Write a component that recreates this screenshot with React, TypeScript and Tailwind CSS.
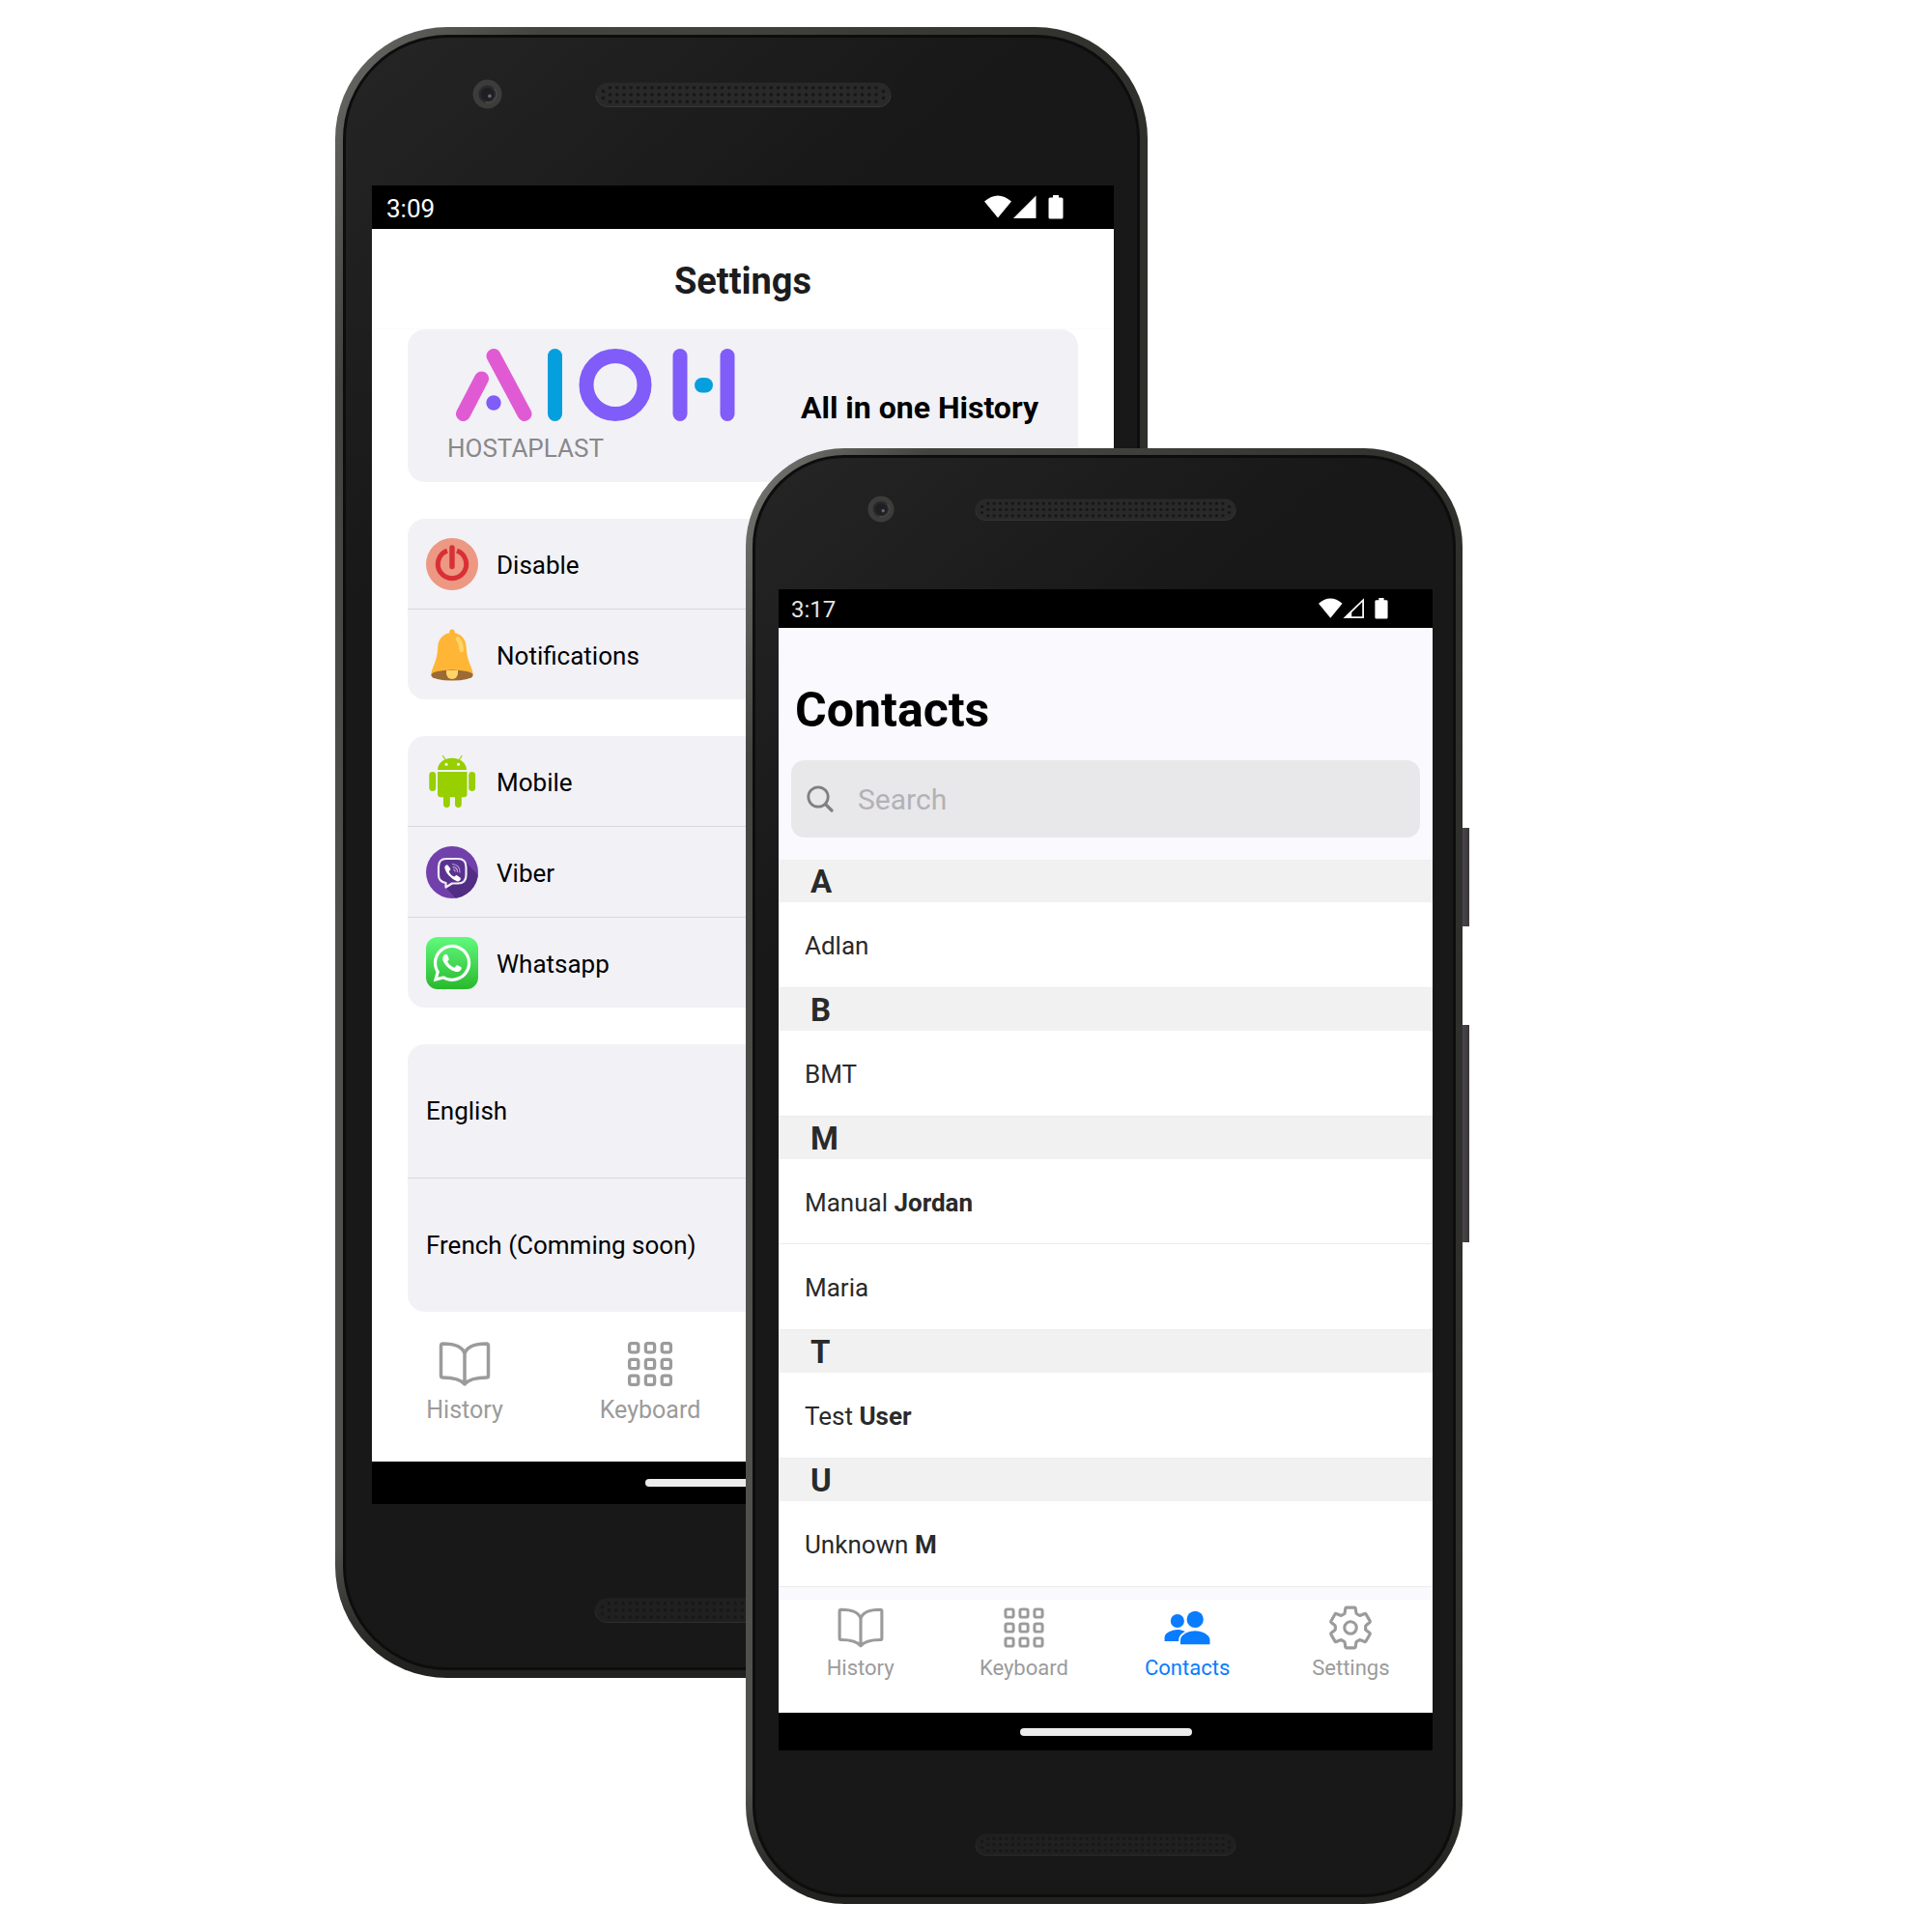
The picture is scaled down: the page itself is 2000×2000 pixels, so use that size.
import React, { useId, useState } from "react";
import { IoBookOutline, IoPeopleSharp, IoSettingsOutline } from "react-icons/io5";
import { FaWhatsapp } from "react-icons/fa";

function SpeakerGrille({ className, dim }: { className: string; dim?: boolean }) {
  const columns = Array.from({ length: 39 }, (_, i) => 15.5 + i * 7.25);
  return (
    <svg viewBox="0 0 307 26" className={className} aria-hidden="true">
      <rect x="0.5" y="0.5" width="306" height="25" rx="12.5" fill={dim ? "#202020" : "#292929"} />
      <path
        d="M1 14 A12 12 0 0 0 13 25.5 H294 A12 12 0 0 0 306 14"
        fill="none"
        stroke={dim ? "#2d2d2d" : "#383838"}
      />
      <g fill={dim ? "#181818" : "#171717"}>
        {[9.5, 16.5].map((y) => (
          <React.Fragment key={y}>
            <circle cx="8.5" cy={y} r="1.8" />
            <circle cx="298.5" cy={y} r="1.8" />
          </React.Fragment>
        ))}
        {columns.map((x) => (
          <React.Fragment key={x}>
            <circle cx={x} cy="5.8" r="1.8" />
            <circle cx={x} cy="13" r="1.8" />
            <circle cx={x} cy="20.2" r="1.8" />
          </React.Fragment>
        ))}
      </g>
    </svg>
  );
}

function Camera({ className }: { className: string }) {
  return (
    <svg viewBox="0 0 32 32" className={className} aria-hidden="true">
      <circle cx="16" cy="16" r="15.5" fill="#3c3c3b" />
      <circle cx="16" cy="16" r="9.5" fill="#2a2a2c" />
      <circle cx="16" cy="16" r="7" fill="#1e1e23" />
      <path d="M23.5 10 A9 9 0 0 1 14 24.5" fill="none" stroke="#4a4a4c" strokeWidth="1.4" />
      <circle cx="18.5" cy="18" r="1.9" fill="#66666b" />
    </svg>
  );
}

function StatusIcons({ className, weak }: { className: string; weak?: boolean }) {
  return (
    <svg viewBox="0 0 82 25" className={className} fill="#fff" role="img" aria-label="Wi-Fi, signal, battery">
      <path d="M0 6.5 Q14 -5.5 28 6.5 L14 23.5 Z" />
      {weak ? (
        <>
          <path d="M31.5 23 L52.5 23 L52.5 2.5 Z" fill="none" stroke="#fff" strokeWidth="2" />
          <path d="M30 24 L39 24 L39 15 Z" />
        </>
      ) : (
        <path d="M30 24 L53.5 24 L53.5 0.5 Z" />
      )}
      <path d="M71 0 H77 V2.5 H80 Q81.5 2.5 81.5 4 V23 Q81.5 24.5 80 24.5 H68 Q66.5 24.5 66.5 23 V4 Q66.5 2.5 68 2.5 H71 Z" />
    </svg>
  );
}

function SearchIcon() {
  return (
    <svg viewBox="0 0 28 28" className="mx-0.5 size-7 shrink-0 text-[#808083]" fill="none" aria-hidden="true">
      <circle cx="12" cy="12" r="10.2" stroke="currentColor" strokeWidth="2.8" />
      <path d="M19.5 19.5 L26 26" stroke="currentColor" strokeWidth="3.2" strokeLinecap="round" />
    </svg>
  );
}

function KeypadIcon({ className }: { className?: string }) {
  const offsets = [6.6, 23.4, 40.2];
  return (
    <svg viewBox="0 0 56 56" className={className} fill="none" stroke="currentColor" strokeWidth="3.3" aria-hidden="true">
      {offsets.map((y) => offsets.map((x) => <rect key={`${x}-${y}`} x={x} y={y} width="9.2" height="9.2" rx="2.2" />))}
    </svg>
  );
}

function AiohLogo() {
  return (
    <svg viewBox="0 0 289 75" className="ml-[9px] h-[75px] w-[289px]" role="img" aria-label="AIOH">
      <g strokeWidth="15" strokeLinecap="round" fill="none">
        <path d="M26.5 31 L7.5 67.5" stroke="#e05bd3" />
        <path d="M39 7.5 L71 67.5" stroke="#e05bd3" />
        <path d="M102.5 7.5 V67.5" stroke="#049fdc" />
        <circle cx="165" cy="37.5" r="30" stroke="#805cf8" />
        <path d="M232 7.5 V67.5" stroke="#805cf8" />
        <path d="M281 7.5 V67.5" stroke="#805cf8" />
      </g>
      <circle cx="39" cy="56" r="7.7" fill="#805cf8" />
      <rect x="247" y="30" width="19" height="15.5" rx="7.75" fill="#049fdc" />
    </svg>
  );
}

const rowIcon = "size-[54px] shrink-0";

function PowerIcon() {
  return (
    <svg viewBox="0 0 54 54" className={rowIcon} aria-hidden="true">
      <circle cx="27" cy="27" r="27" fill="#ec9883" />
      <path d="M32 13.2 A14.7 14.7 0 1 1 22 13.2" fill="none" stroke="#d93035" strokeWidth="5" />
      <path d="M27 10 V29.5" stroke="#d93035" strokeWidth="5.4" strokeLinecap="round" />
    </svg>
  );
}

function BellIcon() {
  return (
    <svg viewBox="0 0 54 54" className={rowIcon} aria-hidden="true">
      <path
        d="M27 .5c1.8 0 2.8 1.2 2.8 2.8v1C37.7 6 41.7 12 41.7 19.5 42.2 34 48.7 41 48.7 47H5.4C5.4 41 11.7 34 12.2 19.5 12.2 12 16.3 6 24.2 4.3v-1C24.2 1.7 25.2.5 27 .5z"
        fill="#ffb636"
      />
      <ellipse cx="27" cy="48" rx="21.7" ry="5.6" fill="#9c6a34" />
      <path d="M21 43 H33 V46 A6 6 0 0 1 21 46 Z" fill="#ffd469" />
      <path d="M33 10.5 Q36.5 14.5 36.7 22" fill="none" stroke="#ffd469" strokeWidth="4.5" strokeLinecap="round" />
    </svg>
  );
}

function AndroidIcon() {
  return (
    <svg viewBox="0 0 54 54" className={rowIcon} aria-hidden="true">
      <g fill="#97cf00">
        <path d="M12 15 C12 8 18.5 2.7 27 2.7 S42 8 42 15 Z" />
        <path d="M12 17 H42.5 V40 Q42.5 43.3 39 43.3 H15.5 Q12 43.3 12 40 Z" />
        <rect x="3.3" y="17" width="6.9" height="20" rx="3.4" />
        <rect x="44.2" y="17" width="6.9" height="20" rx="3.4" />
        <path d="M18 42 H24.8 V50.5 A3.4 3.4 0 0 1 18 50.5 Z" />
        <path d="M30 42 H36.8 V50.5 A3.4 3.4 0 0 1 30 50.5 Z" />
      </g>
      <path d="M17.5 .5 L20.5 5 M37 .5 L34 5" stroke="#97cf00" strokeWidth="1.2" strokeLinecap="round" />
      <circle cx="21" cy="9.2" r="1.5" fill="#fff" />
      <circle cx="33.5" cy="9.2" r="1.5" fill="#fff" />
    </svg>
  );
}

function ViberIcon() {
  const clip = useId();
  return (
    <svg viewBox="0 0 54 54" className={rowIcon} aria-hidden="true">
      <clipPath id={clip}>
        <circle cx="27" cy="27" r="27" />
      </clipPath>
      <g clipPath={`url(#${clip})`}>
        <rect width="54" height="54" fill="#7140ab" />
        <path d="M40.5 16 L60 36 V60 H36 L20 42 Z" fill="#512d84" />
        <path
          d="M21 13 H33 Q41.5 13 41.5 21.5 V30 Q41.5 38.5 33 38.5 H27 L20.5 42.5 V38 Q13 36.5 13 30 V21.5 Q13 13 21 13 Z"
          fill="#5a3391"
          stroke="#f1edf6"
          strokeWidth="2.2"
          strokeLinejoin="round"
        />
        <path
          d="M19.5 21 q1.5-2.5 3.2-1.2 l2.5 3.2 q.7 1.3-.8 2.3 q-1 .8-.2 2 q2 3.5 4.8 4.3 q.8 0 1.3-.8 q1-1.2 2.3-.3 l3 2.3 q1.2 1.3-1 3 q-1.2 1-2.6.5 Q21.5 31.5 19.3 22.6 Z"
          fill="#fff"
        />
        <path
          d="M27.5 18.5 q7.5.8 7.5 8.5 M28 21.3 q4.5.7 4.5 5 M28.5 24 q1.6.4 1.6 2"
          fill="none"
          stroke="#b9a6d6"
          strokeWidth="1.2"
          strokeLinecap="round"
        />
      </g>
    </svg>
  );
}

function WhatsappIcon() {
  return (
    <span className="flex size-[54px] shrink-0 items-center justify-center rounded-xl bg-linear-to-b from-[#60fa7c] to-[#28b92b]">
      <FaWhatsapp className="size-11 text-white" aria-hidden="true" />
    </span>
  );
}

const allTabs = [
  { name: "History", Icon: IoBookOutline },
  { name: "Keyboard", Icon: KeypadIcon },
  { name: "Contacts", Icon: IoPeopleSharp },
  { name: "Settings", Icon: IoSettingsOutline },
];

function TabBar({ large, active, count = 4 }: { large?: boolean; active?: string; count?: number }) {
  const [current, setCurrent] = useState(active);
  return (
    <nav aria-label="Main" className={large ? "grid h-[129px] grid-cols-4 bg-white" : "grid h-[117px] grid-cols-4 bg-white pt-1"}>
      {allTabs.slice(0, count).map(({ name, Icon }) => (
        <button
          key={name}
          type="button"
          onClick={() => setCurrent(name)}
          className={`flex flex-col items-center ${current === name ? "text-[#0a7cff]" : "text-[#9b9b9b]"}`}
        >
          <Icon className={large ? "size-14" : "size-[50px]"} />
          <span className={large ? "mt-[5px] text-[25px] leading-[30px]" : "mt-1 text-[22px] leading-[26px]"}>{name}</span>
        </button>
      ))}
    </nav>
  );
}

function SettingsScreen() {
  const groups = [
    [
      { label: "Disable", Icon: PowerIcon },
      { label: "Notifications", Icon: BellIcon },
    ],
    [
      { label: "Mobile", Icon: AndroidIcon },
      { label: "Viber", Icon: ViberIcon },
      { label: "Whatsapp", Icon: WhatsappIcon },
    ],
  ];
  return (
    <div className="flex flex-col bg-white text-black">
      <div className="flex h-[45px] items-center justify-between bg-black pr-[52px] pl-[15px] text-white">
        <span className="pt-0.5 text-[26px] leading-none">3:09</span>
        <StatusIcons className="h-[25px] w-[82px]" />
      </div>
      <header className="flex h-[104px] items-center justify-center border-b border-[#fafafa] pt-1">
        <h1 className="text-[38px] leading-[44px] font-bold text-[#1c1c1e]">Settings</h1>
      </header>
      <main className="flex flex-col gap-[38px] px-[37px]">
        <section className="flex h-[158px] items-center justify-between rounded-[18px] bg-[#f2f1f6] px-[41px]">
          <div>
            <AiohLogo />
            <p className="mt-3 text-[26px] leading-8 text-[#88888a]">HOSTAPLAST</p>
          </div>
          <h2 className="pt-[3px] text-[32px] leading-10 font-bold">All in one History</h2>
        </section>
        {groups.map((group) => (
          <ul key={group[0].label} className="divide-y divide-[#d9d8dd] rounded-[18px] bg-[#f2f1f6]">
            {group.map(({ label, Icon }) => (
              <li key={label}>
                <button type="button" className="flex h-[93px] w-full items-center gap-[19px] px-[19px] text-left text-[26px]">
                  <Icon />
                  <span className="pt-1">{label}</span>
                </button>
              </li>
            ))}
          </ul>
        ))}
        <ul className="divide-y divide-[#d9d8dd] rounded-[18px] bg-[#f2f1f6]">
          {["English", "French (Comming soon)"].map((label) => (
            <li key={label}>
              <button type="button" className="flex h-[138px] w-full items-center px-[19px] text-left text-[26px]">
                {label}
              </button>
            </li>
          ))}
        </ul>
      </main>
      <div className="mt-[26px]">
        <TabBar large count={2} />
      </div>
      <div className="flex h-11 items-center justify-center bg-black">
        <div className="h-2 w-[202px] rounded-full bg-[#ececec]" />
      </div>
    </div>
  );
}

const contacts = [
  { letter: "A", people: [["Adlan", ""]] },
  { letter: "B", people: [["BMT", ""]] },
  { letter: "M", people: [["Manual", "Jordan"], ["Maria", ""]] },
  { letter: "T", people: [["Test", "User"]] },
  { letter: "U", people: [["Unknown", "M"]] },
];

function ContactsScreen() {
  return (
    <div className="flex flex-col bg-[#f9f9fe] text-[#2a2a2a]">
      <div className="flex h-10 items-center justify-between bg-black pr-[46px] pl-[13px] text-[#e4e4e4]">
        <span className="pt-0.5 text-[24px] leading-none">3:17</span>
        <StatusIcons className="h-[22px] w-[72px]" weak />
      </div>
      <header className="px-[13px] pt-[57px]">
        <h1 className="pl-1 text-[50px] leading-[56px] font-bold text-black">Contacts</h1>
        <label className="mt-6 flex h-20 items-center gap-[23px] rounded-[14px] bg-[#e8e8ea] px-3.5">
          <SearchIcon />
          <input
            type="text"
            aria-label="Search contacts"
            placeholder="Search"
            className="w-full min-w-0 bg-transparent text-[30px] outline-none placeholder:text-[#b2b2b6]"
          />
        </label>
      </header>
      <main className="mt-[23px]">
        {contacts.map(({ letter, people }) => (
          <section key={letter}>
            <h2 className="h-11 bg-[#f1f1f1] pl-[33px] text-[33px] leading-[46px] font-bold">{letter}</h2>
            <ul className="divide-y divide-[#ececee] border-b border-[#ececee] bg-white">
              {people.map(([first, last]) => (
                <li key={first} className="flex h-[88px] items-center px-[27px] pt-[3px] text-[26px]">
                  <span>
                    {first} <b>{last}</b>
                  </span>
                </li>
              ))}
            </ul>
          </section>
        ))}
      </main>
      <div className="mt-[13px]">
        <TabBar active="Contacts" />
      </div>
      <div className="flex h-[39px] items-center justify-center bg-black">
        <div className="h-2 w-[178px] rounded-full bg-[#ececec]" />
      </div>
    </div>
  );
}

export default function App() {
  return (
    <div className="min-h-screen overflow-hidden bg-white pt-7 pb-7 font-[Roboto,sans-serif]">
      <div className="mx-auto grid w-full max-w-[1306px] items-start">
        <div className="col-start-1 row-start-1 w-full max-w-[841px] rounded-[116px] bg-[linear-gradient(to_bottom,transparent_92%,#222220_99%),linear-gradient(120deg,#6a6a67,#42433f_12%,transparent_30%),linear-gradient(to_right,#50504d,#2f302b)] p-2">
          <div className="rounded-[108px] border-[3px] border-[#0d0d0d] bg-[linear-gradient(140deg,#252525,#181818_25%)]">
            <div className="flex items-center gap-[96px] pt-[43px] pb-[79px] pl-[131px]">
              <Camera className="size-[31px]" />
              <SpeakerGrille className="h-[26px] w-[307px]" />
            </div>
            <div className="pr-6 pl-[27px]">
              <SettingsScreen />
            </div>
            <div className="flex pt-[97px] pb-[46px] pl-[257px]">
              <SpeakerGrille className="h-[26px] w-[307px]" dim />
            </div>
          </div>
        </div>
        <div className="relative col-start-1 row-start-1 mt-[436px] ml-[425px] w-full max-w-[742px] rounded-[102px] bg-[linear-gradient(to_bottom,transparent_92%,#222220_99%),linear-gradient(120deg,#7a7a77,#42433f_12%,transparent_30%),linear-gradient(to_right,#50504d,#2f302b)] p-[7px]">
          <div className="absolute top-[393px] left-full h-[102px] w-[7px] bg-linear-to-r from-[#4c464c] to-[#3a363a]" />
          <div className="absolute top-[597px] left-full h-[225px] w-[7px] bg-linear-to-r from-[#4c464c] to-[#3a363a]" />
          <div className="rounded-[95px] border-[3px] border-[#0d0d0d] bg-[linear-gradient(140deg,#252525,#181818_25%)]">
            <div className="flex items-center gap-[83px] pt-[39px] pb-[69px] pl-[116px]">
              <Camera className="size-7" />
              <SpeakerGrille className="h-[23px] w-[271px]" />
            </div>
            <div className="pr-[21px] pl-6">
              <ContactsScreen />
            </div>
            <div className="flex pt-[86px] pb-10 pl-[227px]">
              <SpeakerGrille className="h-[23px] w-[271px]" dim />
            </div>
          </div>
        </div>
      </div>
    </div>
  );
}
